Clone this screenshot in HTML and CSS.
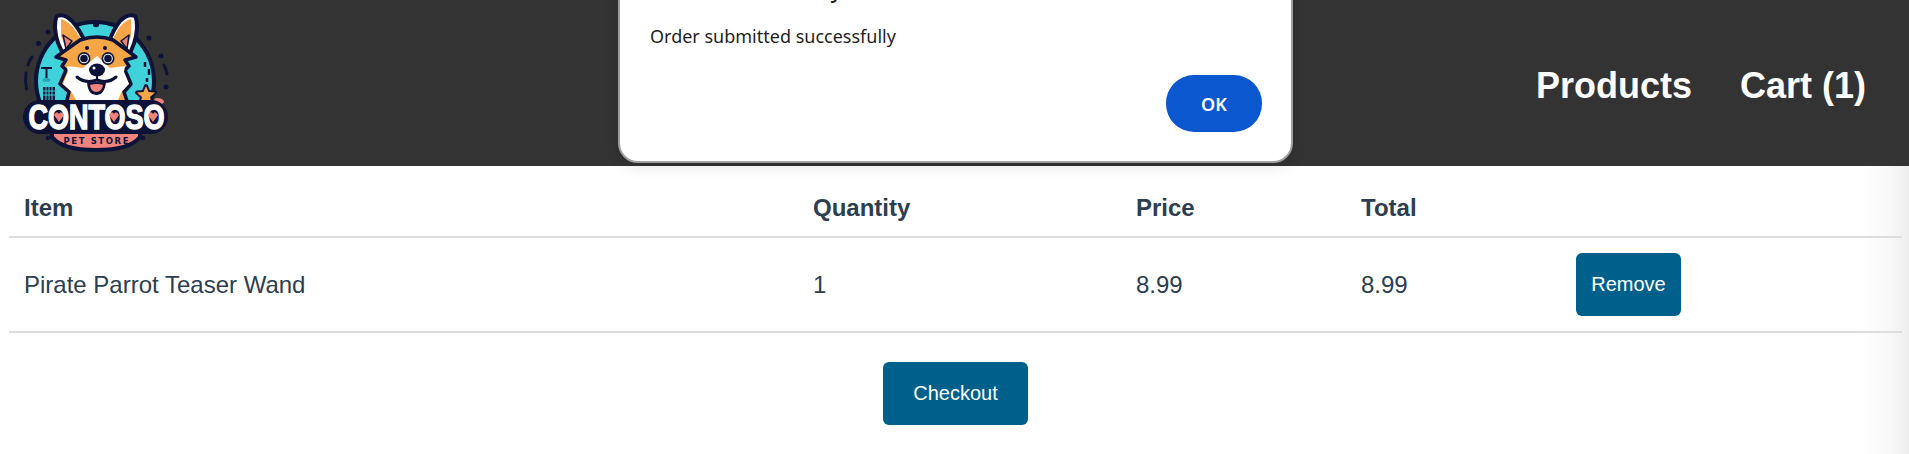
FILE: index.html
```html
<!DOCTYPE html>
<html lang="en">
<head>
    <meta charset="UTF-8">
    <title>Contoso Pet Store</title>
    <link rel="stylesheet" href="styles.css">
</head>
<body>
    <header class="topbar">
        <svg class="logo" viewBox="20 10 155 146" width="155" height="146" aria-label="Contoso Pet Store">
            <!-- dots round the badge -->
            <g fill="#0d1238">
                <circle cx="48" cy="32" r="2.500"/>
                <circle cx="38.500" cy="43.500" r="2.500"/>
                <circle cx="149" cy="38" r="2.500"/>
                <circle cx="161" cy="56" r="2.500"/>
                <circle cx="166" cy="87" r="2.500"/>
                <circle cx="48" cy="138" r="2.300"/>
                <circle cx="143" cy="138" r="2.300"/>
            </g>
            <g fill="none" stroke="#0d1238" stroke-width="3" stroke-linecap="round">
                <path d="M32 57 Q29 61 28 65"/>
                <path d="M26 73 Q25 81 26.500 89"/>
                <path d="M164 65 Q166 69 167 74"/>
            </g>
            <!-- teal disc -->
            <circle cx="95" cy="81" r="61" fill="#0d1238"/>
            <circle cx="95" cy="81" r="57" fill="#3fd2da"/>
            <circle cx="96" cy="24" r="3.200" fill="#0d1238"/>
            <!-- city -->
            <path d="M41 68H52M46.500 68V79" stroke="#0d1238" stroke-width="2" fill="none"/>
            <ellipse cx="46.500" cy="80" rx="4" ry="2" fill="#2aa6b5"/>
            <rect x="43" y="87" width="12" height="14" fill="#0d1238"/>
            <path d="M46 87V101M49 87V101M52 87V101M43 91H55M43 95H55" stroke="#3fd2da" stroke-width="1"/>
            <path d="M145 62V67M149 69V75M147 78V82" stroke="#0d1238" stroke-width="2.500"/>
            <!-- ears -->
            <path d="M57 16 Q64 13 72 21 Q80 30 85 42 L66 58 Q56 44 55 28 Q55 19 57 16Z" fill="#fff" stroke="#0d1238" stroke-width="4" stroke-linejoin="round"/>
            <path d="M61 19 Q71 21 82 41 L68 54 L61 36Z" fill="#f7a647"/>
            <path d="M63 35 L72 41 L66 49Z" fill="#e8857a" stroke="#0d1238" stroke-width="1.500" stroke-linejoin="round"/>
            <path d="M135 16 Q128 13 120 21 Q113 30 109 42 L127 58 Q136 44 137 28 Q137 19 135 16Z" fill="#fff" stroke="#0d1238" stroke-width="4" stroke-linejoin="round"/>
            <path d="M131 19 Q121 21 112 41 L125 54 L131 36Z" fill="#f7a647"/>
            <path d="M129 35 L121 41 L127 49Z" fill="#e8857a" stroke="#0d1238" stroke-width="1.500" stroke-linejoin="round"/>
            <!-- head -->
            <path d="M80 40 Q97 34 113 40 L136 57 L125 60 L129 66 L125 70 L131 84 L124 92 L128 104 H66 L69 92 L60 84 L66 70 L62 66 L66 60 L56 57Z" fill="#f7a647" stroke="#0d1238" stroke-width="3.500" stroke-linejoin="round"/>
            <path d="M97 56 L110 68 L125 66 L124 72 L129 84 L122 91 L118 100 H76 L71 91 L63 84 L68 72 L67 66 L83 68Z" fill="#fff"/>
            <!-- eyes, brows -->
            <circle cx="87" cy="48" r="2" fill="#0d1238"/>
            <circle cx="105" cy="48" r="2" fill="#0d1238"/>
            <circle cx="84" cy="58.500" r="6.500" fill="#0d1238"/>
            <circle cx="84" cy="58.500" r="4.800" fill="#fff"/>
            <circle cx="84" cy="58.500" r="3.800" fill="#0d1238"/>
            <circle cx="108" cy="58.500" r="6.500" fill="#0d1238"/>
            <circle cx="108" cy="58.500" r="4.800" fill="#fff"/>
            <circle cx="108" cy="58.500" r="3.800" fill="#0d1238"/>
            <!-- snout -->
            <ellipse cx="97" cy="70" rx="8" ry="6.500" fill="#0d1238"/>
            <circle cx="94" cy="68" r="1.500" fill="#fff"/>
            <path d="M97 76V79" stroke="#0d1238" stroke-width="2"/>
            <path d="M77 77 Q85 84 97 80 Q108 84 116 77" fill="none" stroke="#0d1238" stroke-width="3" stroke-linecap="round"/>
            <path d="M87 83 Q97 81 106 83 Q104 96 96 95 Q88 95 87 83Z" fill="#0d1238"/>
            <path d="M90 85 Q97 83 103 85 Q102 92 96 92 Q91 92 90 85Z" fill="#f0837c"/>
            <!-- star -->
            <path d="M146 86 L148.500 92 L155 92.500 L150 97 L151.500 103 L146 100 L140.500 103 L142 97 L137 92.500 L143.500 92Z" fill="#f7a647" stroke="#0d1238" stroke-width="4" stroke-linejoin="round"/>
            <path d="M146 86 L148.500 92 L155 92.500 L150 97 L151.500 103 L146 100 L140.500 103 L142 97 L137 92.500 L143.500 92Z" fill="#f7a647"/>
            <ellipse cx="159" cy="101" rx="5" ry="2.800" fill="#f0837c" transform="rotate(15 159 101)"/>
            <!-- name band -->
            <path d="M52 126 H140 V137 Q130 150 96 150 Q62 150 52 137Z" fill="#f0837c" stroke="#0d1238" stroke-width="4"/>
            <rect x="23" y="100" width="145" height="34" rx="17" fill="#0d1238"/>
            <text class="logo-name" x="96.500" y="129" text-anchor="middle" textLength="136" lengthAdjust="spacingAndGlyphs">CONTOSO</text>
            <text class="logo-sub" x="96" y="144" text-anchor="middle" textLength="65">PET STORE</text>
            <g fill="#f0837c">
                <path d="M54 115 Q57 110 59 114 Q61 110 64 115 L59 122Z"/>
                <path d="M109 115 Q112 110 114 114 Q116 110 119 115 L114 122Z"/>
                <path d="M148 115 Q151 110 153 114 Q155 110 158 115 L153 122Z"/>
            </g>
        </svg>
        <nav class="nav">
            <a class="nav-link" href="#">Products</a>
            <a class="nav-link" href="#">Cart (1)</a>
        </nav>
        <div class="dialog">
            <h2 class="dialog-title">localhost:3000 says</h2>
            <p class="dialog-text">Order submitted successfully</p>
            <div class="dialog-actions">
                <button class="dialog-ok">OK</button>
            </div>
        </div>
    </header>
    <main class="cart">
        <table class="cart-table">
            <colgroup>
                <col class="col-item">
                <col class="col-qty">
                <col class="col-price">
                <col class="col-total">
                <col>
            </colgroup>
            <thead>
                <tr>
                    <th>Item</th>
                    <th>Quantity</th>
                    <th>Price</th>
                    <th>Total</th>
                    <th></th>
                </tr>
            </thead>
            <tbody>
                <tr>
                    <td>Pirate Parrot Teaser Wand</td>
                    <td>1</td>
                    <td>8.99</td>
                    <td>8.99</td>
                    <td><button class="btn btn-remove">Remove</button></td>
                </tr>
            </tbody>
        </table>
        <div class="checkout-row">
            <button class="btn btn-checkout">Checkout</button>
        </div>
    </main>
</body>
</html>
```

FILE: styles.css
```css
*{box-sizing: border-box;}
html,body{height: 100%;}
body{
    margin: 0;
    overflow: hidden;
    font-family: "Liberation Sans", Arial, sans-serif;
    color: #2c3e50;
    background: linear-gradient(to right, #fff 97.5%, #f8f8f8 99%, #eee);
}

.topbar{
    position: relative;
    height: 166px;
    padding: 0 43px 0 20px;
    background: #333;
    display: flex;
    align-items: center;
    justify-content: space-between;
}
.logo{display: block;}
.logo-name{
    font: bold 35px "Liberation Sans", Arial, sans-serif;
    fill: #fff;
    stroke: #fff;
    stroke-width: 1.500;
}
.logo-sub{
    font: bold 8.500px "DejaVu Sans", sans-serif;
    fill: #0d1238;
}
.nav{
    margin-top: 5px;
    display: flex;
    gap: 48px;
}
.nav-link{
    color: #fff;
    font-size: 36px;
    font-weight: bold;
    text-decoration: none;
}

.dialog{
    position: absolute;
    left: 618px;
    top: -60px;
    width: 675px;
    height: 223px;
    padding: 31px 29px 29px 30px;
    display: flex;
    flex-direction: column;
    background: #fff;
    border: 2px solid #a0a0a0;
    border-radius: 20px;
    box-shadow: 0 4px 14px rgba(0,0,0,.1);
    color: #1f1f1f;
    font-family: "Noto Sans", "Open Sans", sans-serif;
}
.dialog-title{
    margin: 0;
    font-size: 22px;
    font-weight: 500;
    line-height: 32px;
}
.dialog-text{
    margin: 19px 0 0;
    font-size: 18px;
    line-height: 24px;
}
.dialog-actions{
    margin-top: auto;
    display: flex;
    justify-content: flex-end;
}
.dialog-ok{
    width: 96px;
    height: 57px;
    border: 0;
    border-radius: 28px;
    background: #0b57d0;
    color: #fff;
    font: 600 18px "Noto Sans", "Open Sans", sans-serif;
}

.cart{padding: 0 7px 0 9px;}
.cart-table{
    width: 100%;
    table-layout: fixed;
    border-collapse: collapse;
    font-size: 24px;
}
.col-item{width: 788px;}
.col-qty{width: 323px;}
.col-price{width: 225px;}
.col-total{width: 215px;}
.cart-table th,
.cart-table td{
    padding: 0 16px;
    text-align: left;
    border-bottom: 2px solid #ddd;
}
.cart-table th:first-child,
.cart-table td:first-child{padding-left: 15px;}
.cart-table th{
    height: 71px;
    padding-top: 13px;
}
.cart-table td{height: 95px;}

.btn{
    border: 0;
    border-radius: 6px;
    background: #00608c;
    color: #fff;
    font: 20px "Liberation Sans", Arial, sans-serif;
}
.btn-remove{
    display: block;
    width: 105px;
    height: 63px;
}
.checkout-row{
    margin-top: 29px;
    display: flex;
    justify-content: center;
}
.btn-checkout{
    width: 145px;
    height: 63px;
}
```
